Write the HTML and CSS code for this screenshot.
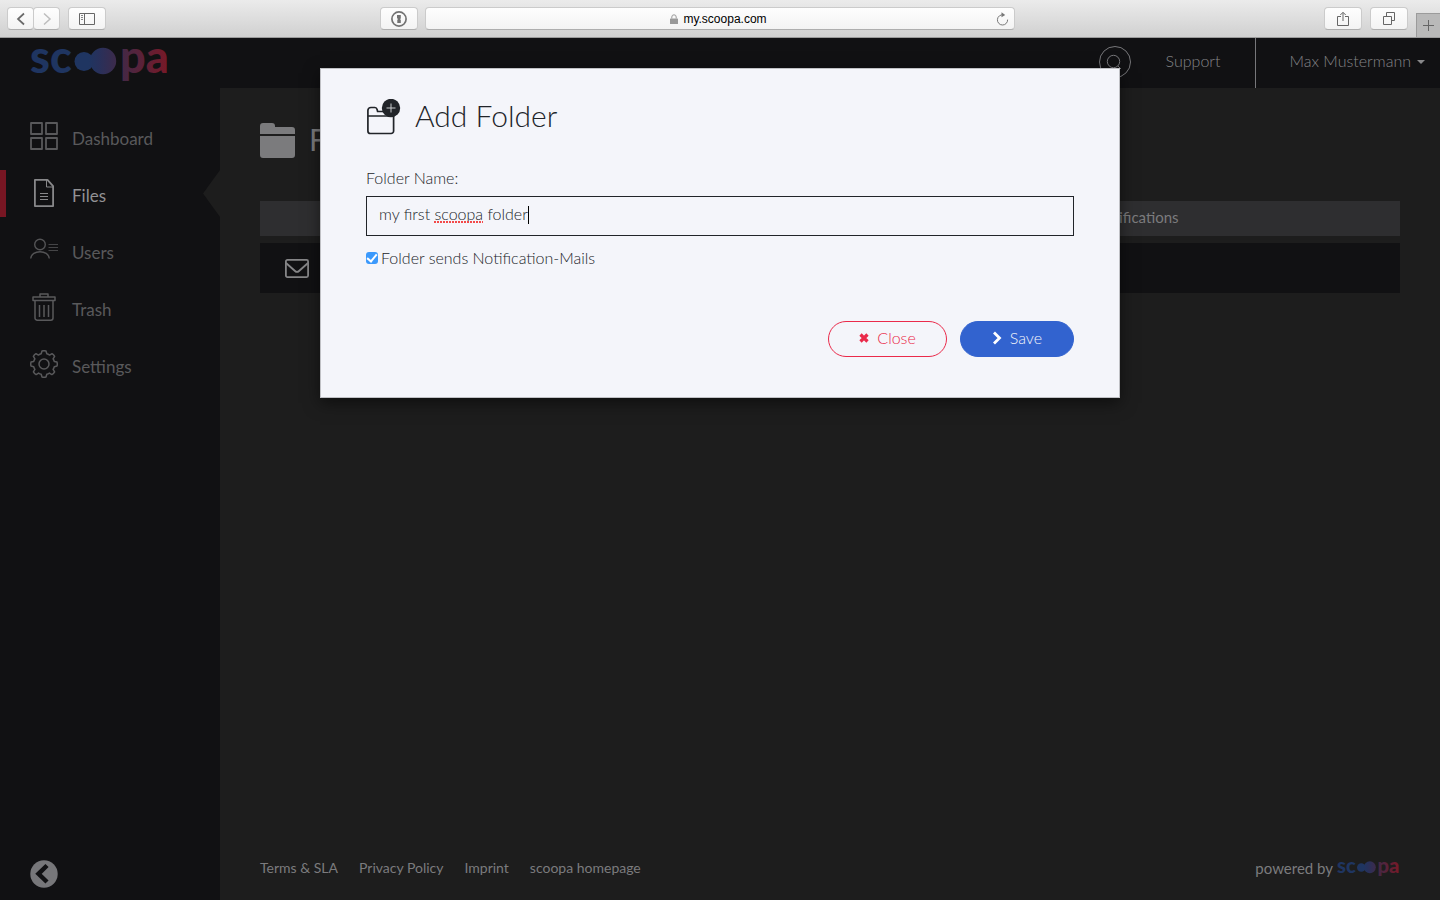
FILE: index.html
```html
<!DOCTYPE html>
<html lang="en">
<head>
<meta charset="utf-8">
<title>scoopa – Files</title>
<link rel="stylesheet" href="styles.css">
</head>
<body>
<div class="window">
  <div class="toolbar">
    <div class="tools">
      <div class="pair">
        <button class="tool back" aria-label="Back"><svg width="10" height="14" viewBox="0 0 10 14"><path d="M8 1.500 2 7l6 5.500" fill="none" stroke="#6a6a6a" stroke-width="1.700"/></svg></button>
        <button class="tool forward" aria-label="Forward"><svg width="10" height="14" viewBox="0 0 10 14"><path d="m2 1.500 6 5.500-6 5.500" fill="none" stroke="#bdbdbd" stroke-width="1.500"/></svg></button>
      </div>
      <button class="tool" aria-label="Show sidebar"><svg width="16" height="12" viewBox="0 0 16 12"><path d="M.5.5h15v11H.5zM5.500.5v11" fill="none" stroke="#666"/><path d="M2 2.500h2M2 4.500h2M2 6.500h2" stroke="#888"/></svg></button>
    </div>
    <div class="address-group">
      <button class="tool" aria-label="Password manager"><svg width="16" height="16" viewBox="0 0 16 16"><circle cx="8" cy="8" r="7.100" fill="none" stroke="#727272" stroke-width="1.700"/><path d="M6 4h3.800v3.400l-.8.7.8.800V12H6.300V8.800l.9-.8-1.200-.8z" fill="#727272"/></svg></button>
      <div class="address">
        <span class="url"><svg width="8" height="10" viewBox="0 0 8 10"><path d="M1.800 4.500V3a2.200 2.200 0 0 1 4.400 0v1.500" fill="none" stroke="#999"/><rect y="4.500" width="8" height="5.500" rx=".6" fill="#999"/></svg>my.scoopa.com</span>
        <button class="reload" aria-label="Reload"><svg width="13" height="14" viewBox="0 0 13 14"><path d="M7.500 2.900A5.100 5.100 0 1 0 11.600 7.600" fill="none" stroke="#777"/><path d="M5.500.3v5l3.700-2.400z" fill="#777"/></svg></button>
      </div>
    </div>
    <div class="tools end">
      <button class="tool" aria-label="Share"><svg width="12" height="16" viewBox="0 0 12 16"><path d="M4 5.500H.5v9h11v-9H8M6 10V1.500M3.300 4 6 1.300 8.700 4" fill="none" stroke="#666"/></svg></button>
      <button class="tool" aria-label="Show tabs"><svg width="12" height="13" viewBox="0 0 12 13"><path d="M.5 4.500h8v8h-8zM3.500 4V.5h8v8H9" fill="none" stroke="#666"/></svg></button>
      <button class="new-tab" aria-label="New tab"><svg width="11" height="11" viewBox="0 0 11 11"><path d="M5.500 0v11M0 5.500h11" stroke="#666"/></svg></button>
    </div>
  </div>

  <div class="app">
    <header class="header">
      <a class="brand" href="#" aria-label="scoopa">
        <svg class="logo" width="140" height="34" viewBox="0 0 140 34">
          <defs><linearGradient id="brand" gradientUnits="userSpaceOnUse" x1="0" y1="0" x2="140" y2="0"><stop offset="0" stop-color="#1f3561"/><stop offset=".42" stop-color="#1f3561"/><stop offset=".5" stop-color="#29305a"/><stop offset=".66" stop-color="#442845"/><stop offset="1" stop-color="#7a1826"/></linearGradient></defs>
          <g id="logo" fill="url(#brand)"><text class="logo-text" x="0" y="25">sc</text><circle cx="54" cy="13.500" r="9.500"/><circle cx="73" cy="13" r="13.200"/><text class="logo-text" x="90" y="25">pa</text></g>
        </svg>
      </a>
      <div class="header-end">
        <button class="search" aria-label="Search"><svg width="32" height="32" viewBox="0 0 32 32"><g fill="none" stroke="#77777a"><circle cx="16" cy="16" r="15.500"/><circle cx="14.500" cy="15.500" r="6.200"/><path d="m19 20 3 3"/></g></svg></button>
        <a class="support" href="#">Support</a>
        <button class="user">Max Mustermann<span class="caret"></span></button>
      </div>
    </header>

    <div class="body">
      <nav class="sidebar">
        <div class="menu">
          <a class="item" href="#"><svg width="28" height="28" viewBox="0 0 28 28"><path d="M1 1h11v11H1zM16 1h11v11H16zM1 16h11v11H1zM16 16h11v11H16z" fill="none" stroke="#59595b" stroke-width="1.800" stroke-linejoin="round"/></svg><span>Dashboard</span></a>
          <a class="item active" href="#"><svg width="28" height="28" viewBox="0 0 28 28"><g fill="none" stroke="#88888a" stroke-linejoin="round"><path d="M4.900.9h12.600l5.600 6.200v20H4.900z" stroke-width="1.800"/><path d="M16.500 1v7h6.500"/><path d="M10 14.500h8M10 17.500h8M10 20.500h8"/></g></svg><span>Files</span></a>
          <a class="item" href="#"><svg width="28" height="28" viewBox="0 0 28 28"><g fill="none" stroke="#545456" stroke-width="1.400"><circle cx="10" cy="8.500" r="5.300"/><path d="M.7 22.500c.8-9 17.800-9 18.600 0"/><path d="M18.500 8.500H28M18.500 11.500H28M18.500 14.500H28" stroke-width="1" stroke="#454547"/></g></svg><span>Users</span></a>
          <a class="item" href="#"><svg width="28" height="28" viewBox="0 0 28 28"><g fill="none" stroke="#59595b" stroke-width="1.500" stroke-linejoin="round"><path d="M10 3.800V1h8v2.800M3 4h22v3.500H3zM5 7.500V25a2.200 2.200 0 0 0 2.200 2.200h13.600A2.200 2.200 0 0 0 23 25V7.500"/><path d="M9.500 12v12M14 12v12M18.500 12v12"/></g></svg><span>Trash</span></a>
          <a class="item" href="#"><svg width="28" height="28" viewBox="0 0 28 28"><g fill="none" stroke="#59595b" stroke-width="1.500" stroke-linejoin="round"><circle cx="14" cy="14" r="5"/><path d="M11.200 3.800 12 1q2-.6 4 0l.8 2.800q1.500.4 2.800 1.300L22 3.700q1.700 1 2.600 2.700l-1.500 2.500q.8 1.200 1.200 2.600l2.700.6q.6 2 0 4l-2.700.6q-.4 1.400-1.200 2.600l1.500 2.500q-1 1.800-2.700 2.800l-2.500-1.500q-1.200.8-2.600 1.200L16 27q-2 .5-4 0l-.8-2.700q-1.400-.4-2.600-1.200L6.100 24.600q-1.700-1-2.700-2.800l1.500-2.500q-.8-1.200-1.200-2.600L1 16.100q-.5-2 0-4l2.700-.6q.4-1.400 1.200-2.600L3.400 6.400q.9-1.700 2.600-2.700l2.400 1.400q1.300-.9 2.800-1.300z"/></g></svg><span>Settings</span></a>
        </div>
        <button class="collapse" aria-label="Collapse menu"><svg width="28" height="28" viewBox="0 0 28 28"><circle cx="14" cy="14" r="13.700" fill="#77777a"/><path d="m17 5.500-8.500 8.300L17 22" fill="none" stroke="#111113" stroke-width="4.500"/></svg></button>
      </nav>

      <main class="main">
        <div class="title">
          <svg width="35" height="35" viewBox="0 0 35 35"><path d="M0 11V3a3 3 0 0 1 3-3h9a3 3 0 0 1 3 3v1h17a3 3 0 0 1 3 3v4zM0 13h35v19a3 3 0 0 1-3 3H3a3 3 0 0 1-3-3z" fill="#7b7b7d"/></svg>
          <h1>Files</h1>
        </div>
        <table class="files">
          <colgroup><col class="col-icon"><col><col class="col-note"></colgroup>
          <thead><tr><th></th><th></th><th>Notifications</th></tr></thead>
          <tbody><tr><td><svg width="24" height="19" viewBox="0 0 24 19"><g fill="none" stroke="#858587" stroke-width="1.800" stroke-linejoin="round"><rect x=".9" y=".9" width="22.200" height="17.200" rx="1.500"/><path d="m1 4 9 8q2 1.800 4 0l9-8"/></g></svg></td><td></td><td></td></tr></tbody>
        </table>
        <footer class="footer">
          <div class="links"><a href="#">Terms &amp; SLA</a><a href="#">Privacy Policy</a><a href="#">Imprint</a><a href="#">scoopa homepage</a></div>
          <div class="powered">powered by <svg class="logo" width="63" height="16" viewBox="0 0 140 34"><use href="#logo"/></svg></div>
        </footer>
      </main>
    </div>
  </div>

  <form class="modal" role="dialog" aria-labelledby="modal-title">
    <div class="modal-head">
      <svg width="35" height="36" viewBox="0 0 35 36"><path d="M1.900 32V11.500a3 3 0 0 1 3-3h4q1.700 0 2.200 2l.5 2h13a3 3 0 0 1 3 3V32a2.500 2.500 0 0 1-2.500 2.500H4.400A2.500 2.500 0 0 1 1.900 32zM2 17h25" fill="none" stroke="#212429" stroke-width="1.700"/><circle cx="25" cy="9" r="9.200" fill="#212429"/><path d="M25 4.500v9M20.500 9h9" stroke="#c8cacd"/></svg>
      <h2 id="modal-title">Add Folder</h2>
    </div>
    <label class="label" for="folder-name">Folder Name:</label>
    <div class="field">
      <input id="folder-name" type="text" value="my first scoopa folder" spellcheck="false">
      <span class="misspelt"></span><span class="cursor"></span>
    </div>
    <label class="check"><input type="checkbox" checked><span>Folder sends Notification-Mails</span></label>
    <div class="actions">
      <button type="button" class="btn close"><svg width="10" height="10" viewBox="0 0 10 10"><path d="m1.500 1.500 7 7M8.500 1.500l-7 7" stroke="currentColor" stroke-width="3.200"/></svg>Close</button>
      <button type="button" class="btn save"><svg width="10" height="14" viewBox="0 0 10 14"><path d="m2 1.500 5.500 5.500L2 12.500" fill="none" stroke="#fff" stroke-width="2.800"/></svg>Save</button>
    </div>
  </form>
</div>
</body>
</html>
```
FILE: styles.css
```css
* { box-sizing: border-box; }
body { margin: 0; font-family: Lato, "Open Sans", sans-serif; font-size: 15px; background: #1d1d1d; }
button { font: inherit; color: inherit; background: none; border: 0; padding: 0; margin: 0; }
a { color: inherit; text-decoration: none; }
svg { display: block; flex: none; }

.window { position: relative; display: flex; flex-direction: column; min-height: 100vh; }

.toolbar { display: flex; align-items: center; justify-content: space-between; height: 38px; padding-left: 7px; background: linear-gradient(#ebebeb, #d0d0d0); border-bottom: 1px solid #9b9b9b; }
.tools { flex: 1; display: flex; align-items: center; gap: 8px; }
.tools.end { align-self: stretch; justify-content: flex-end; }
.pair { display: flex; }
.tool { display: flex; align-items: center; justify-content: center; width: 38px; height: 23px; background: linear-gradient(#fefefe, #f3f3f3); border: 1px solid #cbcbcb; border-bottom-color: #aeaeae; border-radius: 4px; }
.back, .forward { width: 27px; }
.forward { margin-left: -1px; }
.address-group { display: flex; gap: 7px; width: 635px; margin-right: 52px; }
.address { flex: 1; display: flex; align-items: center; height: 23px; padding: 0 5px; background: linear-gradient(#fefefe, #f3f3f3); border: 1px solid #cbcbcb; border-bottom-color: #aeaeae; border-radius: 4px; }
.url { flex: 1; display: flex; align-items: center; justify-content: center; gap: 5px; padding-left: 10px; font: 12px "Liberation Sans", sans-serif; color: #000; }
.new-tab { align-self: flex-end; display: flex; align-items: center; justify-content: center; width: 24px; height: 24px; background: #b9b9b9; border: 1px solid #9b9b9b; border-width: 1px 0 0 1px; }

.app { flex: 1; display: flex; flex-direction: column; }
.header { display: flex; justify-content: space-between; height: 50px; padding-left: 30px; background: #111113; color: #848487; }
.brand { padding-top: 10px; }
.logo { overflow: visible; }
.logo-text { font-family: Lato, sans-serif; font-weight: 900; font-size: 45px; }
.header-end { display: flex; align-items: center; font-size: 16px; font-weight: 300; }
.search { margin: 0 35px 3px 0; }
.support { margin-right: 35px; padding-bottom: 6px; }
.user { display: flex; align-items: center; gap: 6px; align-self: stretch; padding: 0 15px 6px 33px; border-left: 1px solid #77777a; }
.caret { margin-top: 4px; border: 4px solid transparent; border-top-color: #88888a; border-bottom: 0; }

.body { flex: 1; display: flex; }
.sidebar { display: flex; flex-direction: column; justify-content: space-between; width: 220px; padding: 25px 0 12px; background: #111113; }
.menu { display: flex; flex-direction: column; gap: 10px; }
.item { position: relative; display: flex; align-items: center; gap: 14px; height: 47px; padding-left: 30px; font-size: 17px; color: #59595b; }
.item svg { margin-bottom: 2px; }
.item span { padding-top: 4px; }
.item.active { padding-left: 24px; border-left: 6px solid #781623; color: #929294; }
.item.active::after { content: ""; position: absolute; top: 0; right: 0; width: 17px; height: 47px; background: #1d1d1d; clip-path: polygon(100% 0, 0 50%, 100% 100%); }
.collapse { align-self: flex-start; margin-left: 30px; }

.main { flex: 1; display: flex; flex-direction: column; padding: 35px 40px 22px; color: #7b7b7d; }
.title { display: flex; align-items: center; gap: 14px; height: 35px; }
h1 { margin: 0; padding-bottom: 4px; font-size: 30px; font-weight: 400; }
.files { width: 100%; margin-top: 36px; border-spacing: 0 7px; table-layout: fixed; }
.col-icon { width: 74px; }
.col-note { width: 306px; }
th { height: 35px; padding: 0 0 4px; background: #2e2e30; font-weight: 400; text-align: left; }
td { height: 50px; padding: 0 0 0 25px; background: #111113; }
.footer { display: flex; justify-content: space-between; align-items: center; margin-top: auto; font-size: 14px; line-height: 20px; }
.links { display: flex; gap: 21px; }
.powered { display: flex; align-items: center; gap: 4px; font-size: 15px; }
.powered .logo { margin-top: 2px; }

.modal { position: absolute; top: 68px; left: 50%; width: 800px; margin-left: -400px; padding: 30px 45px 40px; background: #f4f5fa; border: 1px solid #c0c1c5; box-shadow: 0 5px 15px rgba(0, 0, 0, .5); color: #212429; font-size: 16px; font-weight: 300; }
.modal-head { display: flex; align-items: center; gap: 14px; height: 36px; }
h2 { margin: 0; padding-bottom: 4px; font-size: 30px; font-weight: 300; }
.label { display: block; margin-top: 33px; line-height: 20px; }
.field { position: relative; margin-top: 8px; }
.field input { display: block; width: 100%; height: 40px; padding: 0 12px 6px; font: inherit; color: #212429; background: transparent; border: 1px solid #212429; outline: 0; }
.misspelt { position: absolute; left: 68px; top: 25px; width: 49px; height: 2px; background: repeating-linear-gradient(90deg, #f34a4a 0 2px, transparent 2px 3px); }
.cursor { position: absolute; left: 162px; top: 10px; width: 1px; height: 18px; background: #000; }
.check { display: flex; align-items: center; gap: 3px; margin-top: 12px; line-height: 20px; }
.check input { appearance: none; display: grid; place-items: center; width: 12px; height: 12px; margin: 0; background: #3b99fc; border-radius: 3px; }
.check input:checked::after { content: ""; width: 4px; height: 8px; margin-bottom: 2px; border: solid #fff; border-width: 0 2px 2px 0; transform: rotate(40deg); }
.actions { display: flex; justify-content: flex-end; gap: 13px; margin-top: 53px; }
.btn { display: flex; align-items: center; justify-content: center; gap: 8px; height: 36px; border: 1px solid #ea2a4a; border-radius: 18px; color: #ea2a4a; padding: 0 30px 3px; }
.btn.save { padding: 0 31px 3px; background: #3263cf; border-color: #3263cf; color: #f4f5fa; }
```
